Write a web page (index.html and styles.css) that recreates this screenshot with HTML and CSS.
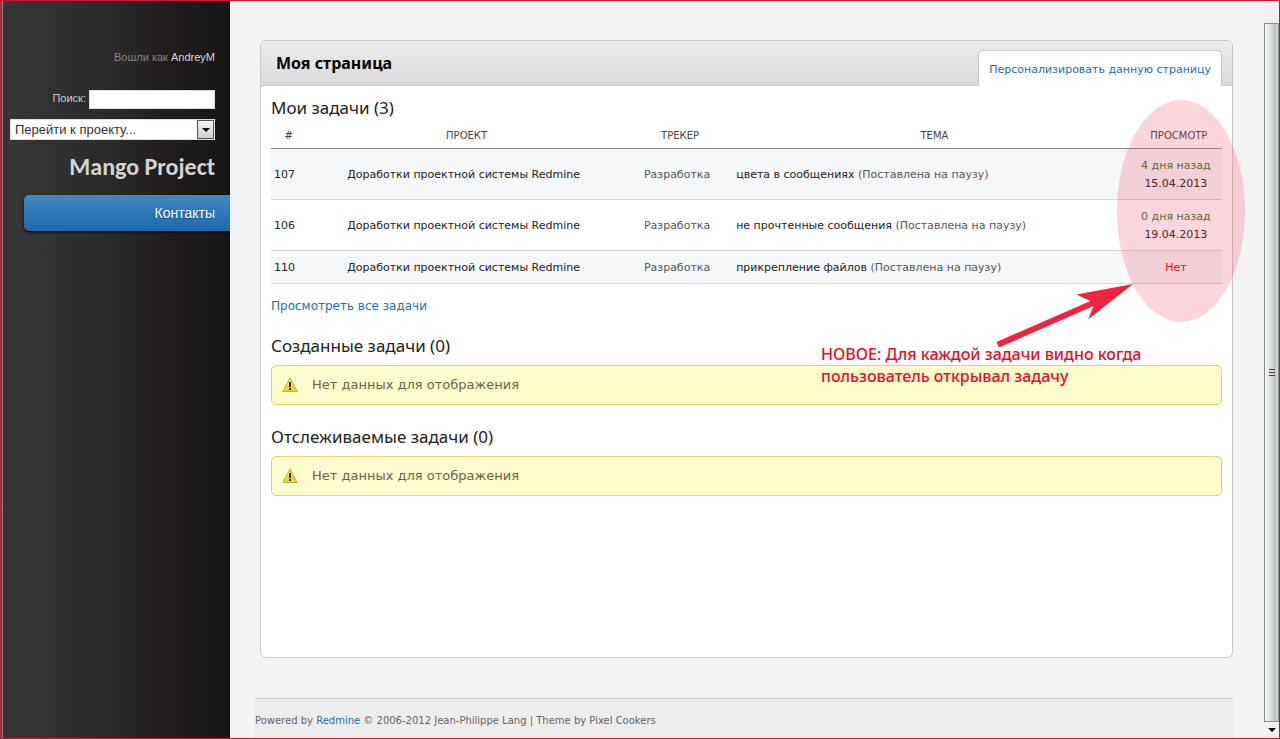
FILE: index.html
```html
<!DOCTYPE html>
<html lang="ru">
<head>
<meta charset="utf-8">
<title>Моя страница - Mango Project</title>
<link rel="stylesheet" href="styles.css">
</head>
<body>
<div class="frame">
  <aside class="sidebar">
    <p class="account">Вошли как <a href="#">AndreyM</a></p>
    <form class="search">
      <label for="q">Поиск:</label>
      <input id="q" type="text">
    </form>
    <div class="jump">
      <select aria-label="Перейти к проекту"><option>Перейти к проекту...</option></select>
      <span class="jump-arrow" aria-hidden="true"><svg viewBox="0 0 8 4" width="8" height="4"><path d="M0 0h8L4 4z"/></svg></span>
    </div>
    <h1 class="brand">Mango Project</h1>
    <nav><a class="nav-link" href="#">Контакты</a></nav>
  </aside>

  <div class="main">
    <main class="panel">
      <header class="panel-head">
        <h2>Моя страница</h2>
        <a class="tab" href="#">Персонализировать данную страницу</a>
      </header>
      <div class="panel-body">
        <section>
          <h3>Мои задачи (3)</h3>
          <table class="issues">
            <colgroup><col class="c-id"><col class="c-project"><col class="c-tracker"><col class="c-subject"><col class="c-viewed"></colgroup>
            <thead>
              <tr><th>#</th><th>Проект</th><th>Трекер</th><th>Тема</th><th>Просмотр</th></tr>
            </thead>
            <tbody>
              <tr><td class="id">107</td><td>Доработки проектной системы Redmine</td><td class="muted">Разработка</td><td class="subject">цвета в сообщениях <span class="muted">(Поставлена на паузу)</span></td><td><span class="ago">4 дня назад</span><br>15.04.2013</td></tr>
              <tr><td class="id">106</td><td>Доработки проектной системы Redmine</td><td class="muted">Разработка</td><td class="subject">не прочтенные сообщения <span class="muted">(Поставлена на паузу)</span></td><td><span class="ago">0 дня назад</span><br>19.04.2013</td></tr>
              <tr><td class="id">110</td><td>Доработки проектной системы Redmine</td><td class="muted">Разработка</td><td class="subject">прикрепление файлов <span class="muted">(Поставлена на паузу)</span></td><td><span class="never">Нет</span></td></tr>
            </tbody>
          </table>
          <a class="all" href="#">Просмотреть все задачи</a>
        </section>
        <section>
          <h3>Созданные задачи (0)</h3>
          <p class="nodata">
            <svg class="warn" viewBox="0 0 16 16" width="16" height="16"><path d="M8 1.2 15.3 14.5H.7z" fill="#e9d935" stroke="#c2b02e" stroke-linejoin="round"/><path d="M8 3 11 8.500H5z" fill="#f6ef93"/><path d="M7 5h2v5H7zM7 11h2v2H7z" fill="#222"/></svg>
            Нет данных для отображения
          </p>
        </section>
        <section>
          <h3>Отслеживаемые задачи (0)</h3>
          <p class="nodata">
            <svg class="warn" viewBox="0 0 16 16" width="16" height="16"><path d="M8 1.2 15.3 14.5H.7z" fill="#e9d935" stroke="#c2b02e" stroke-linejoin="round"/><path d="M8 3 11 8.500H5z" fill="#f6ef93"/><path d="M7 5h2v5H7zM7 11h2v2H7z" fill="#222"/></svg>
            Нет данных для отображения
          </p>
        </section>
      </div>
    </main>
    <footer class="footer">Powered by <a href="#">Redmine</a> © 2006-2012 Jean-Philippe Lang | Theme by Pixel Cookers</footer>
  </div>

  <div class="scrollbar" aria-hidden="true">
    <div class="thumb"><svg viewBox="0 0 6 8" width="6" height="8"><path d="M0 .5h6M0 3.500h6M0 6.500h6" stroke="#444"/></svg></div>
    <div class="down"><svg viewBox="0 0 8 4" width="8" height="4"><path d="M0 0h8L4 4z"/></svg></div>
  </div>

  <div class="callout">
    <svg class="marks" viewBox="0 0 440 243" width="440" height="243">
      <ellipse cx="360" cy="111" rx="64" ry="111" fill="#f03050" fill-opacity=".2"/>
      <path d="M312 184 255.500 194.500 269.500 201 175.500 242 178 247.500 272.500 206 267 219.500z" fill="#f0243f"/>
    </svg>
    <p class="note">НОВОЕ: Для каждой задачи видно когда пользователь открывал задачу</p>
  </div>
</div>
</body>
</html>
```
FILE: styles.css
```css
* { box-sizing: border-box; }

body {
  margin: 0;
  background: #f3f3f3;
  color: #222;
  font-family: Verdana, "DejaVu Sans", sans-serif;
  font-size: 11px;
}

h1, h2, h3, p { margin: 0; }
a { color: #1b6fb3; text-decoration: none; }
svg { display: block; }

.frame {
  position: relative;
  display: flex;
  min-height: 100vh;
  border: 1px solid #d2122e;
  border-left: 2px solid #a82a38;
}

/* Sidebar */
.sidebar {
  flex: 0 0 228px;
  overflow: hidden;
  padding: 49px 15px 0 7px;
  border-left: 1px solid #8a8082;
  background: linear-gradient(90deg, #383737, #2b2b2b 45%, #221e1f 70%, #171516);
  font-family: Arial, "Liberation Sans", sans-serif;
  color: #c8c8c8;
}
.account { color: #858585; line-height: 14px; text-align: right; }
.account a { color: #d8d8d8; }
.search {
  display: flex;
  justify-content: flex-end;
  gap: 3px;
  margin-top: 26px;
}
.search label { line-height: 16px; }
.search input {
  width: 126px;
  height: 19px;
  border: 1px solid #ddd;
  background: #fff;
}
.jump { position: relative; margin-top: 10px; }
.jump select {
  display: block;
  width: 100%;
  height: 21px;
  padding: 0 4px;
  border: 1px solid #ddd;
  border-radius: 0;
  appearance: none;
  background: #fff;
  color: #333;
  font: 13px Arial, "Liberation Sans", sans-serif;
}
.jump-arrow {
  position: absolute;
  top: 1px;
  right: 1px;
  display: grid;
  place-items: center;
  width: 17px;
  height: 19px;
  border: 1px solid #555;
  background: linear-gradient(#f4f4f4, #cfcfcf);
  pointer-events: none;
}
.brand {
  margin-top: 12px;
  font: bold 24px/30px Calibri, Lato, sans-serif;
  color: #d4d4d4;
  text-align: right;
}
.nav-link {
  display: block;
  margin: 13px -15px 0 14px;
  padding-right: 15px;
  border-radius: 5px 0 0 5px;
  background: linear-gradient(#4389c0, #1b69ae);
  box-shadow: 0 1px 3px #000;
  color: #fff;
  font-size: 14px;
  line-height: 36px;
  text-align: right;
  text-shadow: 0 1px 1px #124a7c;
}

/* Main column */
.main {
  flex: 1;
  display: flex;
  flex-direction: column;
  min-width: 0;
  padding: 39px 31px 0 25px;
}
.panel {
  flex: 1;
  margin-left: 5px;
  border: 1px solid #c9c9c9;
  border-radius: 6px;
  background: #fff;
}
.panel-head {
  display: flex;
  justify-content: space-between;
  align-items: flex-end;
  height: 45px;
  padding: 0 10px 0 15px;
  border-bottom: 1px solid #c9c9c9;
  border-radius: 5px 5px 0 0;
  background: linear-gradient(#ececec, #dadada);
}
.panel-head h2 {
  align-self: center;
  font: bold 16px/22px "Trebuchet MS", "Noto Sans", sans-serif;
  color: #000;
}
.tab {
  height: 36px;
  margin-bottom: -1px;
  padding: 0 10px;
  border: 1px solid #c9c9c9;
  border-bottom: 0;
  border-radius: 5px 5px 0 0;
  background: #fff;
  line-height: 37px;
}
.panel-body { padding: 10px; }
h3 {
  font: 17px/24px "Trebuchet MS", "Noto Sans", sans-serif;
  color: #222;
}

.issues {
  width: 100%;
  border-collapse: collapse;
  table-layout: fixed;
}
.c-id { width: 3.7%; }
.c-project { width: 33.1%; }
.c-tracker { width: 11.8%; }
.c-subject { width: 41.7%; }
.c-viewed { width: 9.7%; }
.issues th {
  height: 28px;
  padding: 4px 0 0 6px;
  border-bottom: 1px solid #8f8f86;
  color: #444;
  font-size: 10px;
  font-weight: normal;
  text-transform: uppercase;
}
.issues th:first-child { padding-left: 0; }
.issues td {
  padding: 8px 0 6px;
  border-bottom: 1px solid #d3d5d7;
  line-height: 18px;
  text-align: center;
}
.issues tr:nth-child(odd) td { background: #f6f7f9; }
.issues td.id, .issues td.subject { padding-left: 3px; text-align: left; }
.issues .muted { color: #555; }
.ago { color: #2f7d17; }
.never { color: #e3001b; }
.all {
  display: block;
  margin: 13px 0 19px;
  font-size: 12px;
  line-height: 18px;
}
.nodata {
  display: flex;
  align-items: center;
  gap: 14px;
  height: 40px;
  margin: 7px 0 20px;
  padding: 0 10px;
  border: 1px solid #dfd75c;
  border-radius: 5px;
  background: #fffbcc;
  color: #6b6344;
  font-size: 13px;
}

.footer {
  height: 40px;
  margin-top: 40px;
  border-top: 1px solid #ccc;
  background: #ededed;
  color: #666;
  font-size: 10px;
  line-height: 43px;
}

/* Window scrollbar */
.scrollbar {
  flex: 0 0 15px;
  display: flex;
  flex-direction: column;
  padding-top: 22px;
  background: #f0eff2;
}
.thumb {
  flex: 1;
  display: grid;
  place-items: center;
  border: 1px solid #8d8d90;
  background: linear-gradient(90deg, #f4f6f5, #e2e6e5 35%, #bdc3c4 75%, #dcd6d9);
}
.down {
  display: grid;
  place-items: center;
  height: 16px;
}

/* Annotation laid over the page */
.callout {
  position: absolute;
  top: 99px;
  right: -2px;
  width: 460px;
  pointer-events: none;
}
.marks { overflow: visible; }
.note {
  width: 330px;
  color: #e0102d;
  font: 500 16px/22px "Myriad Pro", "Noto Sans", sans-serif;
}
```
